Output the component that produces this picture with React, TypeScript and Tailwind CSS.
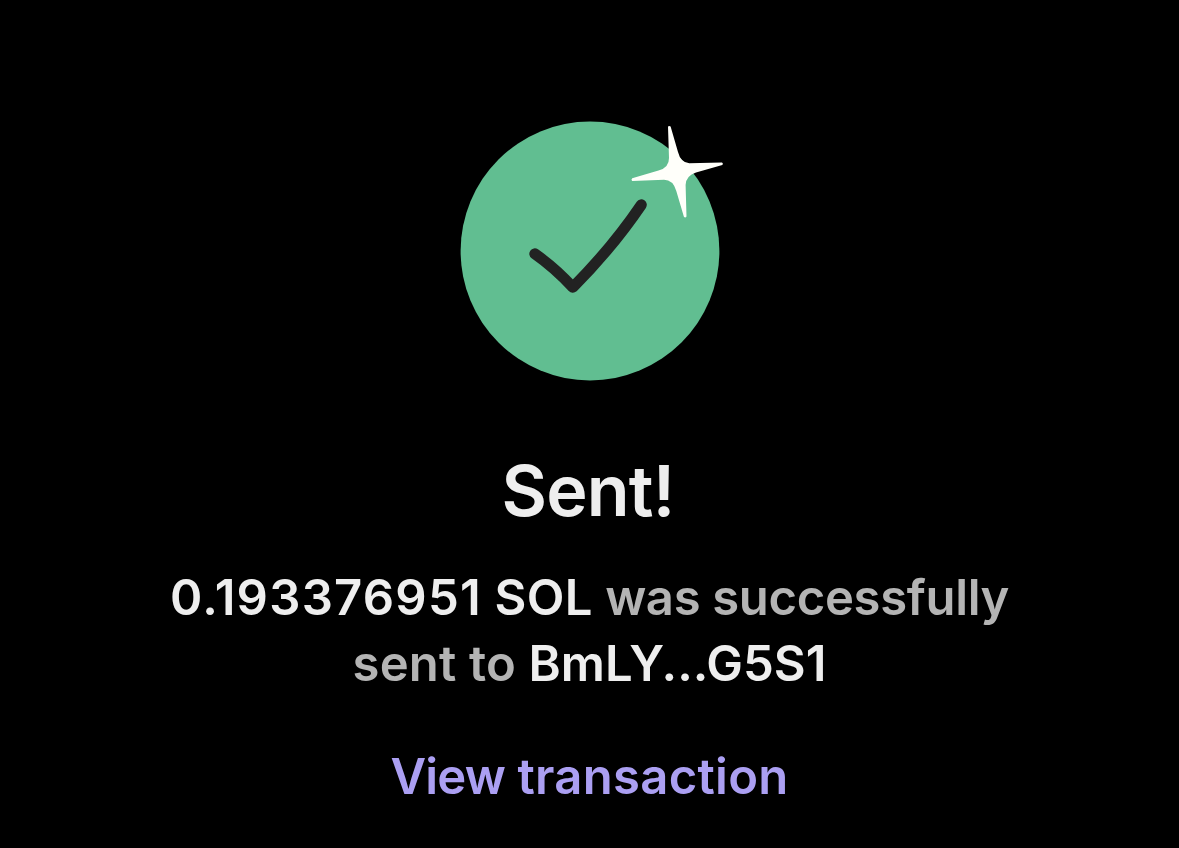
function SuccessBadge() {
  return (
    <svg className="h-[280px] w-[279px]" viewBox="0 0 279 280" fill="none" aria-hidden="true">
      <circle cx="140" cy="141" r="129.4" fill="#61BE91" />
      <path
        d="M84.8 143.8Q105 158 122.8 177.3Q162 138 191.3 94.8"
        stroke="#222222"
        strokeWidth="11"
        strokeLinecap="round"
        strokeLinejoin="round"
      />
      {/* Sparkle */}
      <path
        d="M218 16.6Q219.3 15.2 220.6 16.6L228 42Q230.7 52.8 239.3 53.2L272 52.4Q273.8 53.6 272.3 55L246 62.6Q236 65.8 235.6 75L236.5 106.6Q235.2 108.3 233.9 106.8L226.3 81Q223 69.8 214 69.8L182.2 71.1Q180.7 69.6 182.2 68.2L208.5 60.5Q219.2 57.7 219 48Z"
        fill="#FFFFFA"
      />
    </svg>
  )
}

export default function App() {
  return (
    <div className="flex min-h-screen flex-col items-center bg-black pt-[110px] text-center font-['Inter',sans-serif] text-[#EEEEEE]">
      <SuccessBadge />

      <h1 className="mt-[60px] pr-[3px] text-[70px] leading-[82px] font-semibold tracking-[-0.8px]">Sent!</h1>

      <p className="mt-[33px] w-[900px] text-[49px] leading-[66px] font-semibold text-[#B4B4B4]">
        <span className="text-[#EEEEEE]">
          <span className="tracking-[1.25px]">0.193376951</span> <span className="tracking-[0.4px]">SOL</span>
        </span>{' '}
        <span className="tracking-[-0.33px]">was successfully</span>
        <br />
        <span className="tracking-[0.2px]">sent to</span> <span className="text-[#EEEEEE]">BmLY...G5S1</span>
      </p>

      <button className="mt-[47px] text-[49px] leading-[66px] font-semibold text-[#AB9FF2]">
        <span className="tracking-[-0.8px]">View</span> <span className="tracking-[0.3px]">transaction</span>
      </button>
    </div>
  )
}
